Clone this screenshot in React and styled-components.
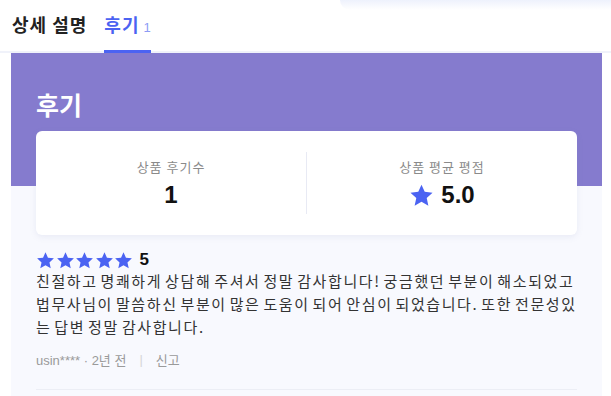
import React from 'react';
import styled, { createGlobalStyle } from 'styled-components';

const GlobalStyle = createGlobalStyle`
  html, body {
    margin: 0;
    padding: 0;
    background: #fff;
    font-family: "Liberation Sans", "Noto Sans CJK KR", sans-serif;
  }
`;

const Page = styled.div`
  width: 611px;
  height: 396px;
  overflow: hidden;
  background: #fff;
`;

const TabBar = styled.div`
  position: relative;
  display: flex;
  gap: 17px;
  height: 53px;
  padding: 0 12px;
  border-bottom: 2px solid #f0f2fa;
  box-sizing: border-box;

  &::before {
    content: '';
    position: absolute;
    top: 0;
    left: 340px;
    right: 0;
    height: 10px;
    background: linear-gradient(to bottom, rgba(236, 240, 252, 0.9), rgba(255, 255, 255, 0));
    border-bottom-left-radius: 20px;
  }
`;

const Tab = styled.div`
  display: flex;
  align-items: baseline;
  gap: 4px;
  box-sizing: border-box;
  padding-top: 11px;
  height: 53px;
  margin-bottom: -2px;
  font-family: "Noto Sans CJK KR", sans-serif;
  font-size: 18px;
  line-height: 26px;
  letter-spacing: 1px;
  font-weight: 700;
  color: ${(p) => (p.$active ? '#4b63f2' : '#222')};
  border-bottom: 3px solid ${(p) => (p.$active ? '#4b63f2' : 'transparent')};
`;

const TabCount = styled.span`
  font-family: "Liberation Sans", sans-serif;
  font-size: 13px;
  font-weight: 400;
  letter-spacing: 0;
  color: #8d9cf5;
`;

const Content = styled.div`
  margin: 0 9px 0 11px;
  background: #f8f9fe;
  height: 343px;
`;

const Hero = styled.div`
  background: #857bce;
  height: 133px;
  padding: 36px 25px 0;
  box-sizing: border-box;
`;

const HeroTitle = styled.h2`
  margin: 0;
  font-family: "Noto Sans CJK KR", sans-serif;
  font-size: 25px;
  font-weight: 700;
  line-height: 30px;
  color: #fff;
`;

const Inner = styled.div`
  padding: 0 25px;
`;

const SummaryCard = styled.div`
  display: flex;
  align-items: center;
  height: 104px;
  margin-top: -55px;
  background: #fff;
  border-radius: 6px;
  box-shadow: 0 2px 6px rgba(120, 130, 180, 0.12);
`;

const SummaryCell = styled.div`
  flex: 1;
  display: flex;
  flex-direction: column;
  align-items: center;
  gap: 6px;
`;

const SummaryDivider = styled.div`
  width: 1px;
  height: 62px;
  background: #e8eaf4;
`;

const SummaryLabel = styled.div`
  font-family: "Noto Sans CJK KR", sans-serif;
  font-size: 13px;
  letter-spacing: 1px;
  color: #8a8a8a;
  line-height: 18px;
`;

const SummaryValue = styled.div`
  display: flex;
  align-items: center;
  gap: 7px;
  font-size: 24px;
  font-weight: 700;
  color: #111;
  line-height: 26px;
`;

const Review = styled.div`
  padding: 15px 0 21px;
  border-bottom: 1px solid #eceef5;
`;

const StarRow = styled.div`
  display: flex;
  align-items: center;
  gap: 0.5px;
  height: 20px;
`;

const Score = styled.span`
  margin-left: 6px;
  font-size: 17px;
  font-weight: 700;
  color: #111;
`;

const ReviewText = styled.p`
  margin: -1px 0 0;
  font-family: "Noto Sans CJK KR", sans-serif;
  font-size: 15px;
  line-height: 23px;
  letter-spacing: 1.6px;
  word-spacing: -2px;
  word-break: break-all;
  color: #333;
`;

const Meta = styled.div`
  display: flex;
  align-items: center;
  height: 18px;
  margin-top: 12px;
  font-size: 13px;
  color: #9a9a9a;
  font-family: "Liberation Sans", "Noto Sans CJK KR", sans-serif;
`;

const Sep = styled.span`
  margin: 0 13px;
  color: #d6d6d6;
`;

const Star = ({ size = 19 }) => (
  <svg width={size} height={size} viewBox="0 0 24 24">
    <path
      d="M12 1.6l3.1 6.9 7.5.8-5.6 5.1 1.6 7.4L12 18l-6.6 3.8L7 14.4 1.4 9.3l7.5-.8z"
      fill="#4b63f2"
    />
  </svg>
);

export default function App() {
  return (
    <Page>
      <GlobalStyle />
      <TabBar>
        <Tab>상세 설명</Tab>
        <Tab $active>
          후기<TabCount>1</TabCount>
        </Tab>
      </TabBar>
      <Content>
        <Hero>
          <HeroTitle>후기</HeroTitle>
        </Hero>
        <Inner>
          <SummaryCard>
            <SummaryCell>
              <SummaryLabel>상품 후기수</SummaryLabel>
              <SummaryValue>1</SummaryValue>
            </SummaryCell>
            <SummaryDivider />
            <SummaryCell>
              <SummaryLabel>상품 평균 평점</SummaryLabel>
              <SummaryValue>
                <Star size={25} />
                5.0
              </SummaryValue>
            </SummaryCell>
          </SummaryCard>
          <Review>
            <StarRow>
              {[0, 1, 2, 3, 4].map((i) => (
                <Star key={i} />
              ))}
              <Score>5</Score>
            </StarRow>
            <ReviewText>
              친절하고 명쾌하게 상담해 주셔서 정말 감사합니다! 궁금했던 부분이 해소되었고 법무사님이 말씀하신 부분이 많은 도움이 되어 안심이 되었습니다. 또한 전문성있는 답변 정말 감사합니다.
            </ReviewText>
            <Meta>
              usin**** · 2년 전<Sep>|</Sep>신고
            </Meta>
          </Review>
        </Inner>
      </Content>
    </Page>
  );
}
